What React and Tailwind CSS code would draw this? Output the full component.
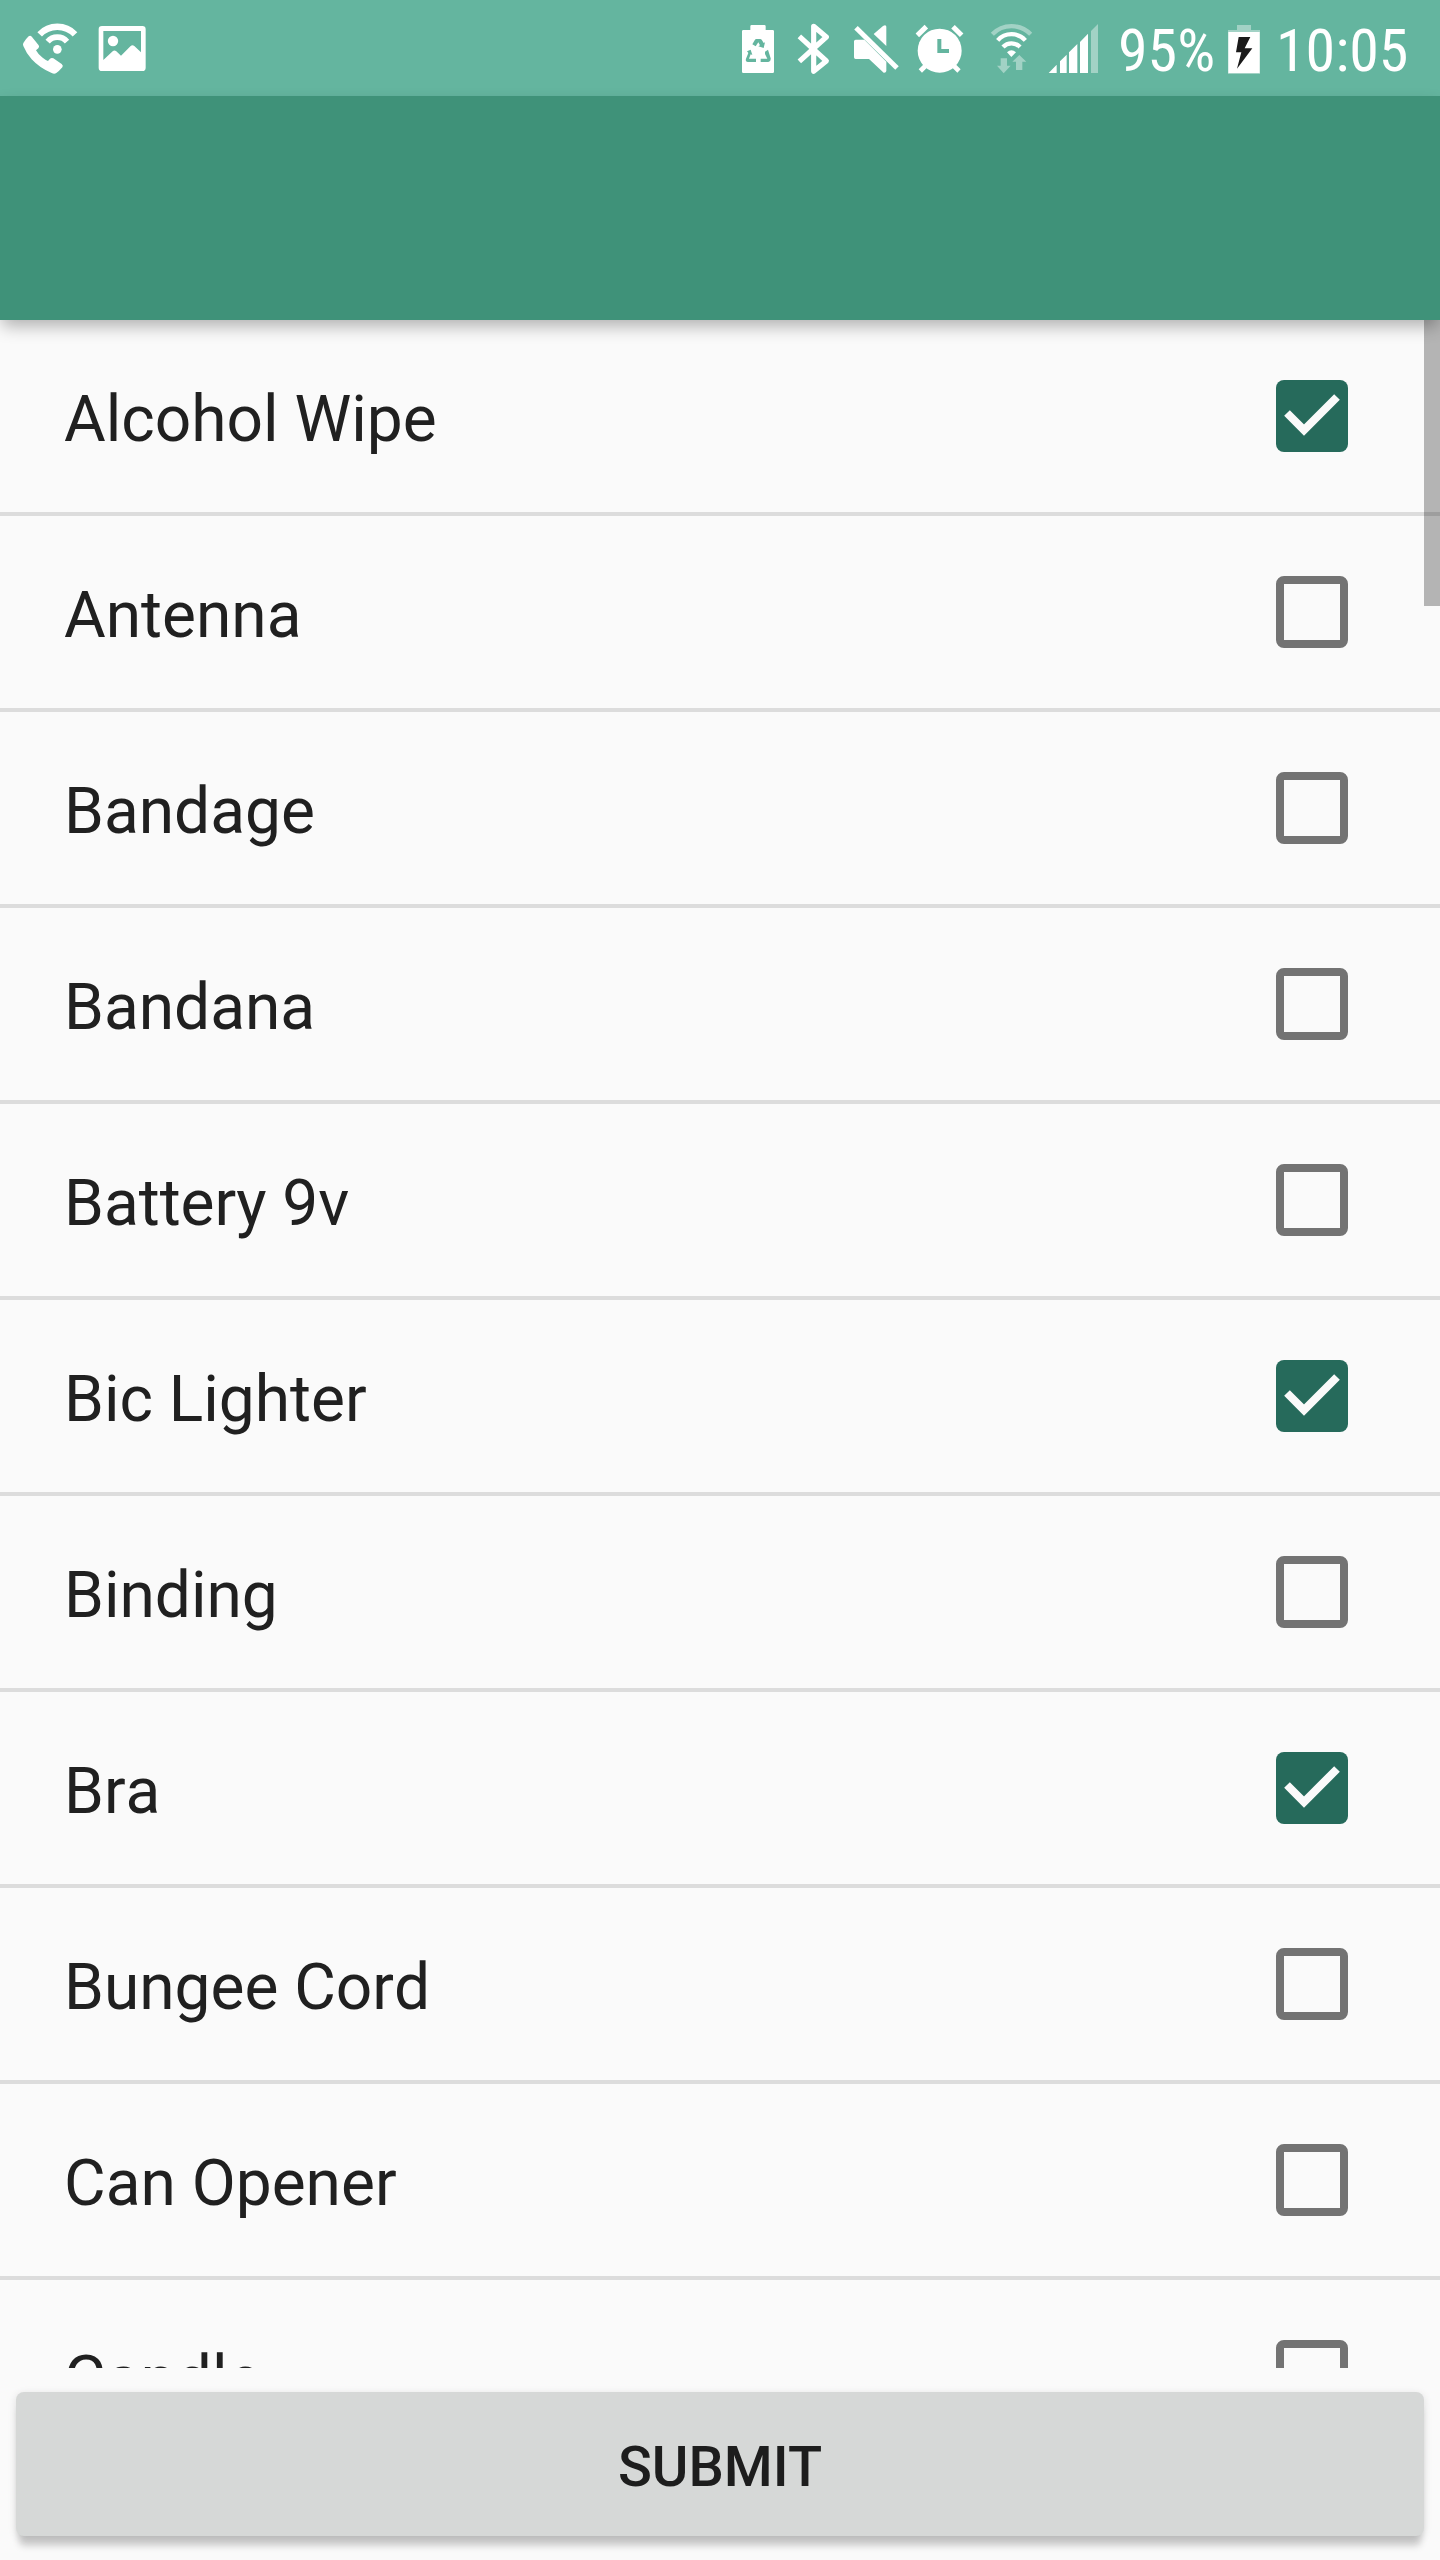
import React, { useState } from 'react';

const initialItems = [
  { name: 'Alcohol Wipe', checked: true },
  { name: 'Antenna', checked: false },
  { name: 'Bandage', checked: false },
  { name: 'Bandana', checked: false },
  { name: 'Battery 9v', checked: false },
  { name: 'Bic Lighter', checked: true },
  { name: 'Binding', checked: false },
  { name: 'Bra', checked: true },
  { name: 'Bungee Cord', checked: false },
  { name: 'Can Opener', checked: false },
  { name: 'Candle', checked: false },
];

// Status bar icons are drawn on a grid of 3 units per pixel, 96px tall
function WifiCallIcon() {
  return (
    <svg viewBox="66 0 168 288" className="w-14 h-24 shrink-0 ml-[22px]" fill="white">
      <path d="M90 107Q93 107 96 111L116 136Q119 140 115 145L108 151Q114 163 128 173Q138 181 144 183L150 176Q155 172 160 175L185 192Q191 197 187 202Q177 214 168 220Q162 223 155 219Q120 205 95 178Q78 158 70 138Q68 133 70 129Q78 116 86 109Z" />
      <circle cx="172" cy="148" r="13" />
      <path d="M119 103A73 73 0 0 1 225 103" fill="none" stroke="white" strokeWidth="19" />
      <path d="M143 125A38 38 0 0 1 201 125" fill="none" stroke="white" strokeWidth="17" />
    </svg>
  );
}

function PictureIcon() {
  return (
    <svg viewBox="294 0 144 288" className="w-12 h-24 shrink-0 ml-5" fill="white">
      <path
        fillRule="evenodd"
        d="M306 78H427Q437 78 437 88V203Q437 213 427 213H306Q296 213 296 203V88Q296 78 306 78ZM310 93V180L338 154Q343 149 349 154L363 167L392 138Q397 133 403 138L423 157V93Z"
      />
      <circle cx="339" cy="123" r="15.5" />
    </svg>
  );
}

function PowerSavingIcon() {
  return (
    <svg viewBox="66 0 96 288" className="w-8 h-24 shrink-0" fill="white">
      <path d="M70 90H91V79Q91 75 95 75H133Q137 75 137 79V90H158Q162 90 162 94V215Q162 219 158 219H70Q66 219 66 215V94Q66 90 70 90Z" />
      <g fill="#64b59f">
        <path d="M109 117H120Q124 117 126 121L131 129L135 127L131 144L115 139L120 136L115 127L107 139L97 133L104 121Q106 117 109 117Z" />
        <path d="M81 154L92 149L97 165L92 163L87 176H108V186H84Q75 185 78 176L85 159Z" />
        <path d="M135 155L144 149L152 175Q153 185 145 186H122V176H142L135 162Z" />
      </g>
    </svg>
  );
}

function BluetoothIcon() {
  return (
    <svg viewBox="231 0 99 288" className="w-[33px] h-24 shrink-0 ml-[23px]" fill="none" stroke="white" strokeWidth="15.5" strokeLinejoin="round">
      <path d="M238 109L319 183L281 214V79L319 111L238 184" />
    </svg>
  );
}

function MuteIcon() {
  return (
    <svg viewBox="399 0 138 288" className="w-[46px] h-24 shrink-0 ml-[23px]" fill="white">
      <path d="M408 83L531 204" stroke="white" strokeWidth="15" />
      <path d="M407 119H433L499 185V213Q498 219 491 218L447 177H407Q402 177 402 172V124Q402 119 407 119Z" />
      <path d="M461 102L489 78Q498 72 499 80V138Z" />
    </svg>
  );
}

function AlarmIcon() {
  return (
    <svg viewBox="45 0 147 288" className="w-[49px] h-24 shrink-0 ml-4" fill="none" stroke="white" strokeWidth="15">
      <circle cx="119" cy="152" r="66" fill="white" stroke="none" />
      <path d="M52 106L79 80M159 80L185 106" />
      <path d="M61 213L82 192M156 192L177 213" strokeWidth="14" />
      <path d="M118 117V153H147" stroke="#64b59f" strokeWidth="12" />
    </svg>
  );
}

function WifiIcon() {
  return (
    <svg viewBox="270 0 129 288" className="w-[43px] h-24 shrink-0 ml-[26px]" fill="none" stroke="white" strokeWidth="13">
      <path d="M277 103A80 80 0 0 1 392 103" strokeOpacity="0.4" />
      <path d="M293 121A56 56 0 0 1 376 121" />
      <path d="M309 141A35 35 0 0 1 360 141" />
      <path d="M321 157Q334 144 348 157L334 171Z" fill="white" stroke="none" />
      <path d="M302 175H321V197H332L311 220L291 197H302ZM358 165L379 185H367V210H348V185H337Z" fill="white" fillOpacity="0.4" stroke="none" />
    </svg>
  );
}

function SignalIcon() {
  return (
    <svg viewBox="444 0 150 288" className="w-[50px] h-24 shrink-0 ml-[15px]" fill="white">
      <path d="M446 219L470 194V219ZM480 184L500 164V219H480ZM507 157L532 132V219H507ZM540 126L564 101V219H540Z" />
      <path d="M573 93L594 72V219H573Z" fillOpacity="0.4" />
    </svg>
  );
}

function ChargingIcon() {
  return (
    <svg viewBox="384 0 96 288" className="w-8 h-24 shrink-0 ml-3" fill="white">
      <path d="M411 75H453V90H480V222H384V90H411Z" fillOpacity="0.4" />
      <path d="M385 96H479V219H385Z" />
      <path d="M416 111H451L434 145H457L411 206L424 157H408Z" fill="#1a1a1a" />
    </svg>
  );
}

function StatusBar() {
  return (
    <div className="h-24 bg-[#64b59f] flex items-center justify-between text-white">
      <div className="flex items-center">
        <WifiCallIcon />
        <PictureIcon />
      </div>
      <div className="flex items-center w-[698px]">
        <PowerSavingIcon />
        <BluetoothIcon />
        <MuteIcon />
        <AlarmIcon />
        <WifiIcon />
        <SignalIcon />
        <div className="w-[98px] shrink-0 ml-5 pt-1.5">
          <span className="block whitespace-nowrap text-[60px] leading-none [font-stretch:75%]">95%</span>
        </div>
        <ChargingIcon />
        <div className="w-[150px] shrink-0 ml-4 pt-1.5">
          <span className="block whitespace-nowrap text-[60px] leading-none [font-stretch:75%]">10:05</span>
        </div>
      </div>
    </div>
  );
}

function Checkbox({ checked }) {
  if (!checked) {
    return <span className="size-[72px] shrink-0 rounded-lg border-8 border-[#737373]" />;
  }
  return (
    <span className="size-[72px] shrink-0 rounded-lg bg-[#266a5b]">
      <svg viewBox="0 0 72 72" className="size-full" fill="none" stroke="#fafafa" strokeWidth="8">
        <path d="M11 33L28 50L61 17" />
      </svg>
    </span>
  );
}

export default function App() {
  const [items, setItems] = useState(initialItems);

  const toggle = (index) => {
    setItems(items.map((item, i) => (i === index ? { ...item, checked: !item.checked } : item)));
  };

  return (
    <div className="w-[1440px] h-[2560px] flex flex-col overflow-hidden bg-[#fafafa] font-['Roboto',sans-serif] text-[#202020]">
      <StatusBar />

      {/* Toolbar */}
      <header className="relative z-10 h-56 shrink-0 bg-[#3f9279] shadow-[0_8px_16px_-2px_rgba(0,0,0,0.3)]" />

      {/* Checklist */}
      <main className="relative h-[2048px] shrink-0 overflow-hidden">
        {items.map((item, index) => (
          <button
            key={item.name}
            onClick={() => toggle(index)}
            className="flex w-full h-[196px] items-center justify-between border-b-4 border-[#dcdcdc] pl-16 pr-[92px] text-left"
          >
            <span className="pt-2 text-[64px] leading-[76px] [font-kerning:none]">{item.name}</span>
            <Checkbox checked={item.checked} />
          </button>
        ))}
        <div className="absolute top-0 right-0 w-4 h-[286px] bg-black/28" />
      </main>

      <footer className="px-4 pt-6 pb-6">
        <button className="block w-full h-36 rounded-lg bg-[#d6d8d7] pt-1.5 text-[56px] font-medium text-[#1d1d1d] shadow-[0_13px_7px_-3px_rgba(0,0,0,0.18),0_2px_8px_rgba(0,0,0,0.12)]">
          SUBMIT
        </button>
      </footer>
    </div>
  );
}
